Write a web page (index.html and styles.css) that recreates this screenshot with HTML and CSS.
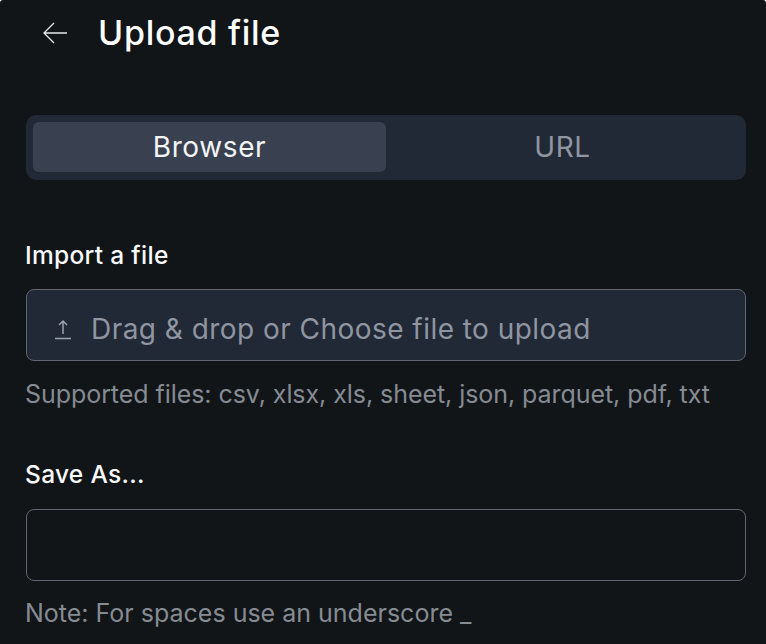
FILE: index.html
```html
<!DOCTYPE html>
<html lang="en">
<head>
<meta charset="utf-8">
<title>Upload file</title>
<link rel="stylesheet" href="styles.css">
</head>
<body>
<main class="panel">
  <header class="header">
    <svg class="back" width="26" height="26" viewBox="0 0 26 26" fill="none" stroke="#e5e7eb" stroke-width="1.3"><path d="M25 13H2M12 3 2 13l10 10"/></svg>
    <h1 class="title">Upload file</h1>
  </header>
  <div class="tabs">
    <div class="tab active">Browser</div>
    <div class="tab">URL</div>
  </div>
  <label class="label first">Import a file</label>
  <div class="field drop">
    <svg class="upload" width="18" height="22" viewBox="0 0 18 22" fill="none" stroke="#9ca3af" stroke-width="1.5"><path d="M9 16V3M5 7l4-4 4 4M1 20.5h16"/></svg>
    <span>Drag &amp; drop or Choose file to upload</span>
  </div>
  <p class="hint">Supported files: csv, xlsx, xls, sheet, json, parquet, pdf, txt</p>
  <label class="label second">Save As...</label>
  <div class="field"></div>
  <p class="hint note">Note: For spaces use an underscore _</p>
</main>
</body>
</html>
```
FILE: styles.css
```css
* { box-sizing: border-box; }
html, body { margin: 0; height: 100%; }
body { background: #fff; color: #fff; font-family: Inter, "Noto Sans", sans-serif; overflow: hidden; font-variant-ligatures: common-ligatures; }
.panel { height: 644px; padding: 0 20px 0 26px; background: #111518; border-radius: 3px 3px 0 0; }
.header { display: flex; align-items: center; height: 66px; padding-left: 16px; gap: 30px; }
.back { flex: none; }
.title { margin: 0; font-size: 34px; font-weight: 500; line-height: 66px; letter-spacing: 0.72px; }
.tabs { display: flex; margin-top: 49px; height: 65px; padding: 7px 7px 8px; background: #222936; border-radius: 10px; }
.tab { flex: 1; display: flex; align-items: center; justify-content: center; font-size: 28px; letter-spacing: 0.6px; color: #8f95a1; border-radius: 6px; }
.tab.active { background: #394150; color: #f3f4f6; }
.label { display: block; margin-left: -1px; font-size: 24.5px; font-weight: 500; line-height: 30px; letter-spacing: 0.3px; color: #f9fafb; }
.first { margin-top: 60px; }
.second { margin-top: 49px; }
.field { height: 72px; margin-top: 19px; border: 1px solid #5f6672; border-radius: 8px; }
.label.second + .field { margin-top: 20px; }
.drop { display: flex; align-items: center; gap: 19px; padding: 8px 0 0 27px; background: #222936; font-size: 28px; letter-spacing: 0.46px; color: #8f95a1; }
.hint { margin: 17px 0 0 -1px; font-size: 25px; line-height: 32px; letter-spacing: -0.06px; color: #868b93; }
.note { margin-top: 16px; letter-spacing: 0; }
```
